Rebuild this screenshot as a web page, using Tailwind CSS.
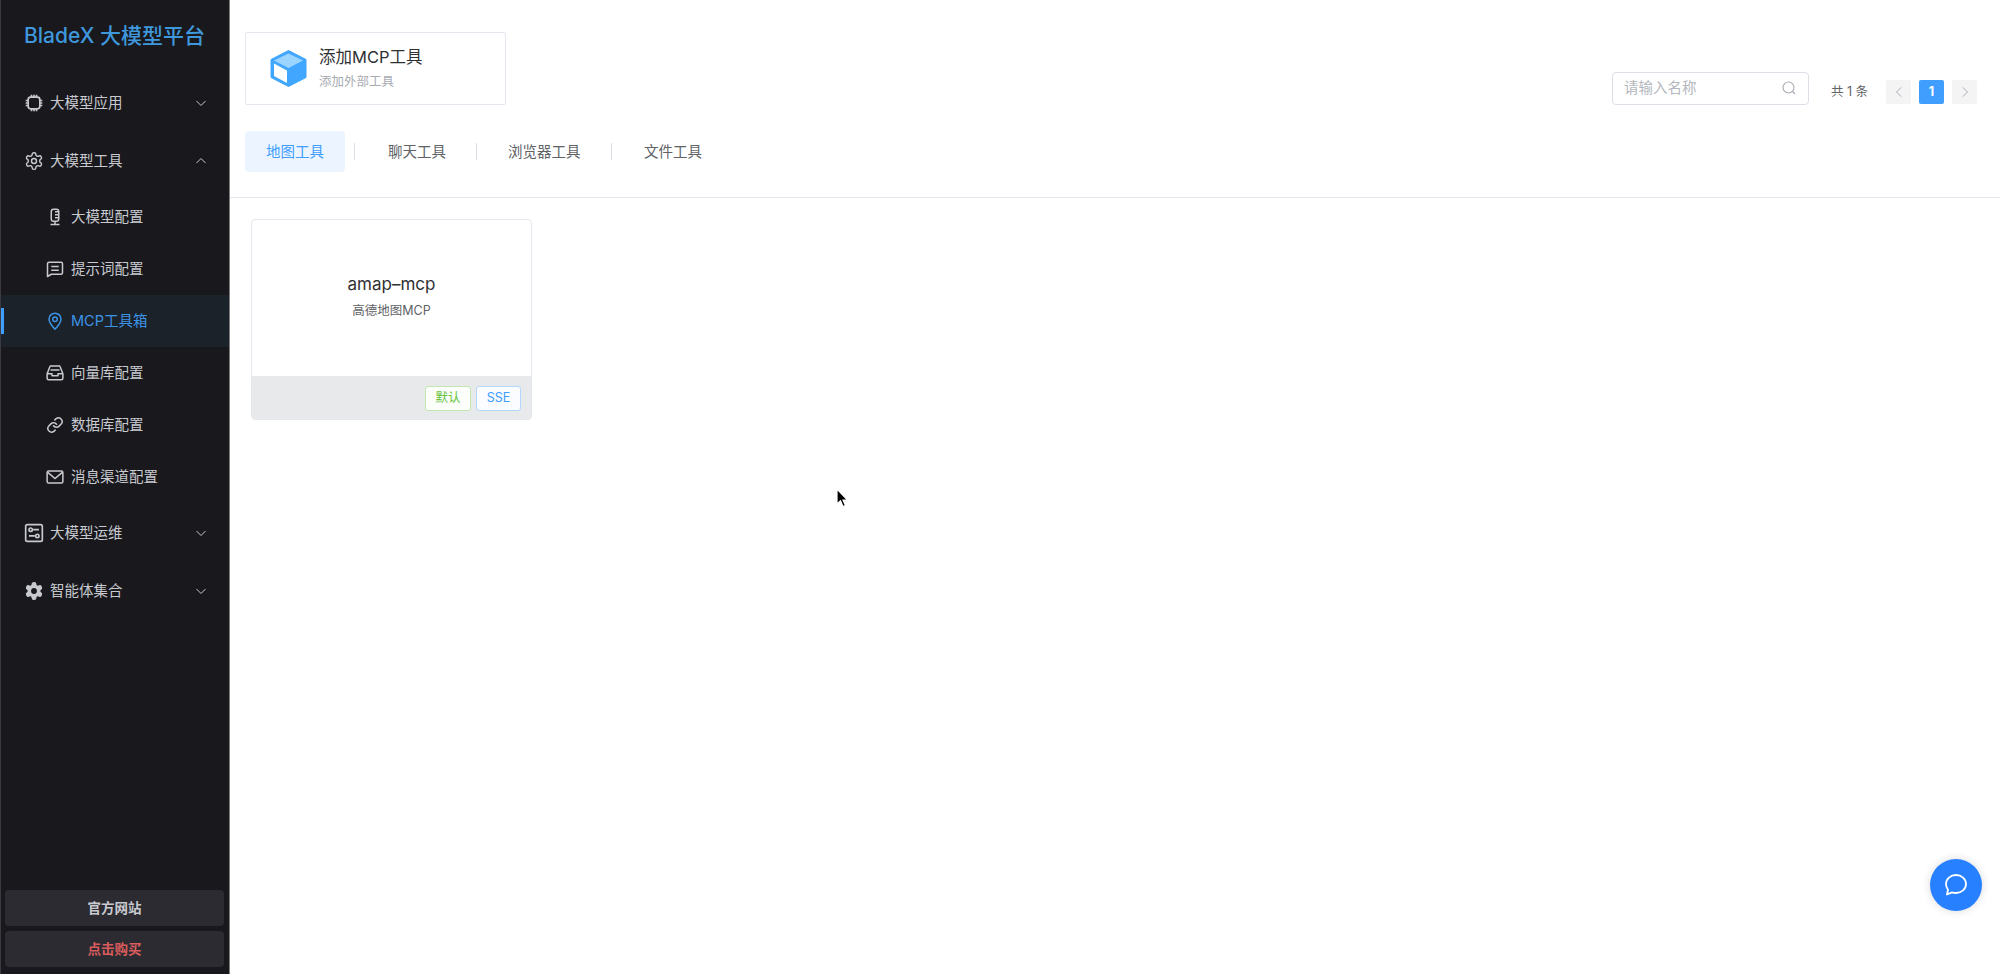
<!DOCTYPE html>
<html lang="zh">
<head>
    <meta charset="UTF-8">
    <title>BladeX 大模型平台</title>
    <script src="https://cdn.jsdelivr.net/npm/@tailwindcss/browser@4"></script>
</head>
<body class="bg-white font-['Inter','Noto_Sans_CJK_SC',sans-serif] text-[#303133]">
    <div class="flex h-[974px] w-[2000px] overflow-hidden relative">
        <!-- sidebar -->
        <aside class="w-[230px] shrink-0 flex flex-col bg-[#18181d] border-l border-[#3a3a40] border-r border-r-[#7d7d80] text-[#c8cad0] text-[14.5px]">
            <div class="h-[74px] pt-[21px] pl-[23px] text-[21px] leading-[30px] font-medium text-[#3f97dc] whitespace-nowrap">BladeX 大模型平台</div>

            <div class="h-[58px] flex items-center pl-[23px] pr-[22px] gap-[6px]">
                <svg class="w-[20px] h-[20px]" viewBox="0 0 24 24" fill="none" stroke="currentColor" stroke-width="2"><rect x="5" y="5" width="14" height="14" rx="3"/><path d="M9 2v3M12 2v3M15 2v3M9 19v3M12 19v3M15 19v3M2 9h3M2 12h3M2 15h3M19 9h3M19 12h3M19 15h3"/></svg>
                <span class="flex-1">大模型应用</span>
                <svg class="w-[12px] h-[12px]" viewBox="0 0 12 12" fill="none" stroke="currentColor"><path d="M1.500 4l4.500 4.500L10.500 4"/></svg>
            </div>
            <div class="h-[58px] flex items-center pl-[23px] pr-[22px] gap-[6px]">
                <svg class="w-[20px] h-[20px]" viewBox="0 0 24 24" fill="none" stroke="currentColor" stroke-width="1.700"><path d="M12.220 2h-.44a2 2 0 0 0-2 2v.18a2 2 0 0 1-1 1.730l-.43.25a2 2 0 0 1-2 0l-.15-.08a2 2 0 0 0-2.730.73l-.22.38a2 2 0 0 0 .73 2.730l.15.1a2 2 0 0 1 1 1.720v.51a2 2 0 0 1-1 1.740l-.15.09a2 2 0 0 0-.73 2.730l.22.38a2 2 0 0 0 2.730.73l.15-.08a2 2 0 0 1 2 0l.43.25a2 2 0 0 1 1 1.730V20a2 2 0 0 0 2 2h.44a2 2 0 0 0 2-2v-.18a2 2 0 0 1 1-1.730l.43-.25a2 2 0 0 1 2 0l.15.08a2 2 0 0 0 2.730-.73l.22-.39a2 2 0 0 0-.73-2.730l-.15-.08a2 2 0 0 1-1-1.740v-.5a2 2 0 0 1 1-1.740l.15-.09a2 2 0 0 0 .73-2.730l-.22-.38a2 2 0 0 0-2.730-.73l-.15.08a2 2 0 0 1-2 0l-.43-.25a2 2 0 0 1-1-1.730V4a2 2 0 0 0-2-2z"/><circle cx="12" cy="12" r="3"/></svg>
                <span class="flex-1">大模型工具</span>
                <svg class="w-[12px] h-[12px]" viewBox="0 0 12 12" fill="none" stroke="currentColor"><path d="M1.500 8L6 3.500 10.500 8"/></svg>
            </div>

            <div class="mt-px h-[52px] flex items-center pl-[45px] gap-[7px]">
                <svg class="w-[18px] h-[18px]" viewBox="0 0 24 24" fill="none" stroke="currentColor" stroke-width="2"><rect x="7" y="1.500" width="10" height="16" rx="3"/><path d="M12 5h5M12 9h5M12 13h5M12 18v3.500M6 22h12"/></svg>
                <span>大模型配置</span>
            </div>
            <div class="h-[52px] flex items-center pl-[45px] gap-[7px]">
                <svg class="w-[18px] h-[18px]" viewBox="0 0 24 24" fill="none" stroke="currentColor" stroke-width="2" stroke-linejoin="round"><path d="M2 5a2 2 0 0 1 2-2h16a2 2 0 0 1 2 2v12a2 2 0 0 1-2 2H7l-5 3z"/><path d="M7 8.500h10M7 13.500h10"/></svg>
                <span>提示词配置</span>
            </div>
            <div class="h-[52px] flex items-center pl-[45px] gap-[7px] bg-[#1b2229] text-[#3d93e6] relative">
                <div class="absolute left-0 top-[13px] h-[26px] w-[3px] bg-[#409eff]"></div>
                <svg class="w-[18px] h-[18px]" viewBox="0 0 24 24" fill="none" stroke="currentColor" stroke-width="2"><path d="M12 23C7 17.500 4 13.500 4 9.500a8 8 0 0 1 16 0c0 4-3 8-8 13.500z"/><circle cx="12" cy="9.500" r="3"/></svg>
                <span>MCP工具箱</span>
            </div>
            <div class="h-[52px] flex items-center pl-[45px] gap-[7px]">
                <svg class="w-[18px] h-[18px]" viewBox="0 0 24 24" fill="none" stroke="currentColor" stroke-width="2" stroke-linejoin="round"><path d="M1.500 13L5 4a2 2 0 0 1 2-1.500h10A2 2 0 0 1 19 4l3.500 9v6a2 2 0 0 1-2 2h-17a2 2 0 0 1-2-2z"/><path d="M1.500 13H8v2.500h8V13h6.500M6 8h12"/></svg>
                <span>向量库配置</span>
            </div>
            <div class="h-[52px] flex items-center pl-[45px] gap-[7px]">
                <svg class="w-[18px] h-[18px]" viewBox="0 0 24 24" fill="none" stroke="currentColor" stroke-width="2" stroke-linecap="round"><path d="M10 13a5 5 0 0 0 7.500.5l3-3a5 5 0 0 0-7-7l-1.700 1.700"/><path d="M14 11a5 5 0 0 0-7.500-.5l-3 3a5 5 0 0 0 7 7l1.700-1.700"/></svg>
                <span>数据库配置</span>
            </div>
            <div class="h-[52px] flex items-center pl-[45px] gap-[7px]">
                <svg class="w-[18px] h-[18px]" viewBox="0 0 24 24" fill="none" stroke="currentColor" stroke-width="2"><rect x="1.500" y="4" width="21" height="16" rx="2"/><path d="M2 5.500l10 8.500 10-8.500"/></svg>
                <span>消息渠道配置</span>
            </div>

            <div class="h-[58px] mt-px flex items-center pl-[23px] pr-[22px] gap-[6px]">
                <svg class="w-[20px] h-[20px]" viewBox="0 0 24 24" fill="none" stroke="currentColor" stroke-width="2"><rect x="2" y="2" width="20" height="20" rx="2"/><path d="M11 8h7M6 15.500h7"/><circle cx="8" cy="8" r="2"/><circle cx="16" cy="15.500" r="2"/></svg>
                <span class="flex-1">大模型运维</span>
                <svg class="w-[12px] h-[12px]" viewBox="0 0 12 12" fill="none" stroke="currentColor"><path d="M1.500 4l4.500 4.500L10.500 4"/></svg>
            </div>
            <div class="h-[58px] flex items-center pl-[23px] pr-[22px] gap-[6px]">
                <svg class="w-[20px] h-[20px]" viewBox="0 0 24 24" fill="currentColor" stroke="currentColor" stroke-width="1.500"><path d="M12.220 2h-.44a2 2 0 0 0-2 2v.18a2 2 0 0 1-1 1.730l-.43.25a2 2 0 0 1-2 0l-.15-.08a2 2 0 0 0-2.730.73l-.22.38a2 2 0 0 0 .73 2.730l.15.1a2 2 0 0 1 1 1.720v.51a2 2 0 0 1-1 1.740l-.15.09a2 2 0 0 0-.73 2.730l.22.38a2 2 0 0 0 2.730.73l.15-.08a2 2 0 0 1 2 0l.43.25a2 2 0 0 1 1 1.730V20a2 2 0 0 0 2 2h.44a2 2 0 0 0 2-2v-.18a2 2 0 0 1 1-1.730l.43-.25a2 2 0 0 1 2 0l.15.08a2 2 0 0 0 2.730-.73l.22-.39a2 2 0 0 0-.73-2.730l-.15-.08a2 2 0 0 1-1-1.740v-.5a2 2 0 0 1 1-1.740l.15-.09a2 2 0 0 0 .73-2.730l-.22-.38a2 2 0 0 0-2.730-.73l-.15.08a2 2 0 0 1-2 0l-.43-.25a2 2 0 0 1-1-1.730V4a2 2 0 0 0-2-2z"/><circle cx="12" cy="12" r="3.500" fill="#18181d" stroke="none"/></svg>
                <span class="flex-1">智能体集合</span>
                <svg class="w-[12px] h-[12px]" viewBox="0 0 12 12" fill="none" stroke="currentColor"><path d="M1.500 4l4.500 4.500L10.500 4"/></svg>
            </div>

            <div class="mt-auto pl-[4px] pr-[5px] pb-[7px] flex flex-col gap-[5px] text-[13.500px] font-bold">
                <div class="h-[36px] rounded-[4px] bg-[#2b2b31] flex items-center justify-center">官方网站</div>
                <div class="h-[36px] rounded-[4px] bg-[#2b2b31] flex items-center justify-center text-[#d95c5c]">点击购买</div>
            </div>
        </aside>

        <!-- main -->
        <main class="flex-1 min-w-0">
            <div class="h-[198px] border-b border-[#e4e7ed] pl-[15px] pr-[23px] pt-[32px] relative">
                <div class="flex items-start justify-between">
                    <div class="w-[261px] h-[73px] border border-[#e4e7ed] rounded-[2px] flex items-center pl-[24px] gap-[12px]">
                        <svg class="w-[37px] h-[37px]" viewBox="0 0 37 37">
                            <path d="M18.500 0.500L36 9.500V27.500L18.500 36.500L1 27.500V9.500Z" fill="#40a6ff" stroke="#40a6ff" stroke-linejoin="round"/>
                            <path d="M18.500 3.500L33 10.500L18.500 18L4 10.500Z" fill="#9bd4ff"/>
                            <path d="M4 13.500L17 20.500V33L4 26Z" fill="#fff"/>
                        </svg>
                        <div class="-mt-[2px]">
                            <div class="text-[16.500px] leading-[22px] text-[#303133]">添加MCP工具</div>
                            <div class="text-[12.500px] leading-[16px] mt-[6px] text-[#a8abb2]">添加外部工具</div>
                        </div>
                    </div>
                    <div class="flex items-start mt-[40px]">
                        <div class="w-[197px] h-[33px] border border-[#dcdfe6] rounded-[4px] flex items-center justify-between pl-[11px] pr-[12px] pb-[2px] text-[14.500px] text-[#b4b7bd]">
                            <span>请输入名称</span>
                            <svg class="w-[14px] h-[14px]" viewBox="0 0 14 14" fill="none" stroke="#a8abb2" stroke-width="1.100"><circle cx="6.500" cy="6.500" r="5.500"/><path d="M10.500 10.500L13 13"/></svg>
                        </div>
                        <div class="ml-[22px] mt-[8px] flex items-center text-[12.500px] text-[#606266]">
                            <span class="w-[55px] whitespace-nowrap">共 1 条</span>
                            <span class="w-[25px] h-[24px] rounded-[2px] bg-[#f4f4f5] flex items-center justify-center text-[#a8abb2]">
                                <svg class="w-[10px] h-[10px]" viewBox="0 0 10 10" fill="none" stroke="currentColor"><path d="M7 0.500L2.500 5L7 9.500"/></svg>
                            </span>
                            <span class="ml-[8px] w-[25px] h-[24px] rounded-[2px] bg-[#409eff] text-white font-bold flex items-center justify-center">1</span>
                            <span class="ml-[8px] w-[25px] h-[24px] rounded-[2px] bg-[#f4f4f5] flex items-center justify-center text-[#a8abb2]">
                                <svg class="w-[10px] h-[10px]" viewBox="0 0 10 10" fill="none" stroke="currentColor"><path d="M3 0.500L7.500 5L3 9.500"/></svg>
                            </span>
                        </div>
                    </div>
                </div>
                <div class="absolute left-[15px] top-[131px] flex items-center text-[14.500px] text-[#606266]">
                    <span class="w-[100px] h-[41px] rounded-[4px] bg-[#ecf5ff] text-[#409eff] flex items-center justify-center">地图工具</span>
                    <span class="ml-[9px] w-px h-[17px] bg-[#dcdfe6]"></span>
                    <span class="ml-[33px] w-[58px] whitespace-nowrap">聊天工具</span>
                    <span class="ml-[30px] w-px h-[17px] bg-[#dcdfe6]"></span>
                    <span class="ml-[31px] w-[73px] whitespace-nowrap">浏览器工具</span>
                    <span class="ml-[30px] w-px h-[17px] bg-[#dcdfe6]"></span>
                    <span class="ml-[32px] whitespace-nowrap">文件工具</span>
                </div>
            </div>

            <div class="ml-[21px] mt-[21px] w-[281px] h-[201px] border border-[#e4e7ed] rounded-[4px] overflow-hidden flex flex-col">
                <div class="flex-1 flex flex-col items-center justify-center pb-[4px]">
                    <div class="text-[17px] leading-[22px] -mt-px text-[#303133]">amap–mcp</div>
                    <div class="text-[12.500px] leading-[16px] mt-[8px] text-[#606266]">高德地图MCP</div>
                </div>
                <div class="h-[43px] bg-[#e7e9eb] border-t border-[#e4e7ed] flex items-center justify-end gap-[5px] pr-[10px] text-[12.500px]">
                    <span class="w-[46px] h-[25px] rounded-[3px] border border-[#c2e7b0] bg-[#fbfefa] text-[#67c23a] flex items-center justify-center">默认</span>
                    <span class="w-[45px] h-[25px] rounded-[3px] border border-[#b3d8ff] bg-[#fafcff] text-[#409eff] flex items-center justify-center">SSE</span>
                </div>
            </div>
        </main>

        <!-- chat button -->
        <div class="absolute left-[1930px] top-[859px] w-[52px] h-[52px] rounded-full bg-[#2680ff] shadow-[0_0_8px_rgba(0,0,0,0.15)] flex items-center justify-center">
            <svg class="w-[24px] h-[24px]" viewBox="0 0 24 24" fill="none" stroke="#fff" stroke-width="1.800" stroke-linejoin="round"><path d="M12 2c5.500 0 10 3.800 10 9s-4.500 9-10 9c-1.400 0-2.700-.2-3.900-.7L3 21.500l1-4.700C2.800 15.200 2 13.200 2 11c0-5.200 4.500-9 10-9z"/></svg>
        </div>

        <!-- mouse cursor -->
        <svg class="absolute left-[835px] top-[488px] w-[14px] h-[20px]" viewBox="0 0 14 20">
            <path d="M2 1V16L5.500 12.800L8 18.500L10.500 17.500L8 12H12.500Z" fill="#000" stroke="#fff" stroke-width="1.200"/>
        </svg>
    </div>
</body>
</html>
